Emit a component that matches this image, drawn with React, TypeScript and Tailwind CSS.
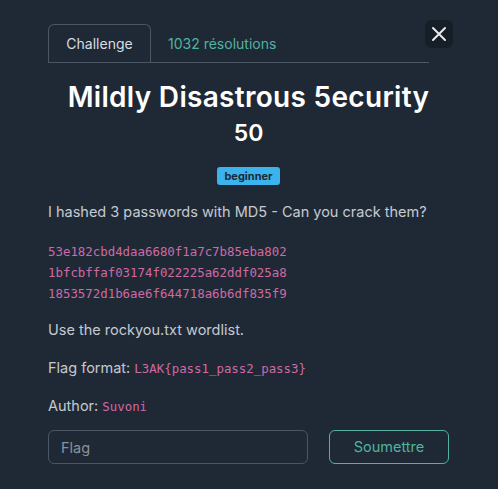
import React from 'react';

const hashes = [
  '53e182cbd4daa6680f1a7c7b85eba802',
  '1bfcbffaf03174f022225a62ddf025a8',
  '1853572d1b6ae6f644718a6b6df835f9',
];

export default function App() {
  return (
    <div
      className="relative w-[498px] h-[489px] bg-[#1f2936] text-[#c5cad1] overflow-hidden"
      style={{ fontFamily: 'Inter, "Noto Sans", sans-serif' }}
    >
      {/* close button */}
      <button className="absolute left-[425px] top-[20px] w-[28px] h-[28px] rounded-md bg-[#161e28] flex items-center justify-center">
        <svg width="18" height="18" viewBox="0 0 18 18" fill="none" stroke="#e8eaed" strokeWidth="2" strokeLinecap="round">
          <path d="M3 3 L15 15 M15 3 L3 15" />
        </svg>
      </button>

      <div className="pl-[48px] pr-[49px] pt-[24px]">
        {/* tabs */}
        <div className="flex items-end w-[381px] border-b border-[#4b5563]">
          <div className="w-[103px] h-[38px] border border-b-0 border-[#4b5563] rounded-t-md flex items-center justify-center text-[14px] text-[#d8dce1]">
            Challenge
          </div>
          <div className="h-[38px] flex items-center pl-[17px] text-[14px] text-[#4fb3a0]">
            1032 résolutions
          </div>
        </div>

        {/* title */}
        <h1 className="mt-[15px] text-center text-[28px] font-semibold text-white leading-[38px] tracking-[0.3px]">
          Mildly Disastrous 5ecurity
        </h1>
        <div className="text-center text-[23px] font-semibold text-white leading-[30px] mt-[2px]">50</div>

        <div className="flex justify-center mt-[19px]">
          <span className="h-[18px] px-[7px] rounded-[3px] bg-[#3bb4ee] text-[#1f2936] text-[11px] font-bold leading-[18px]">
            beginner
          </span>
        </div>

        {/* description */}
        <p className="mt-[17px] text-[14.5px] leading-[20px]">
          I hashed 3 passwords with MD5 - Can you crack them?
        </p>

        <div
          className="mt-[19px] text-[12.4px] leading-[21px] text-[#d06aa3]"
          style={{ fontFamily: '"DejaVu Sans Mono", monospace' }}
        >
          {hashes.map((h) => (
            <div key={h}>{h}</div>
          ))}
        </div>

        <p className="mt-[16px] text-[14.5px] leading-[20px]">Use the rockyou.txt wordlist.</p>

        <p className="mt-[18px] text-[14.5px] leading-[20px]">
          Flag format:{' '}
          <span className="text-[12.4px] text-[#d06aa3]" style={{ fontFamily: '"DejaVu Sans Mono", monospace' }}>
            L3AK{'{'}pass1_pass2_pass3{'}'}
          </span>
        </p>

        <p className="mt-[17px] text-[14.5px] leading-[20px]">
          Author:{' '}
          <span className="text-[12.4px] text-[#d06aa3]" style={{ fontFamily: '"DejaVu Sans Mono", monospace' }}>
            Suvoni
          </span>
        </p>

        {/* flag form */}
        <div className="flex gap-[21px] mt-[13px]">
          <input
            placeholder="Flag"
            className="w-[260px] h-[34px] rounded-md border border-[#4b5563] bg-transparent px-[12px] text-[14.5px] text-white placeholder:text-[#8b929b] outline-none"
          />
          <button className="w-[120px] h-[34px] rounded-md border border-[#4fb3a0] text-[#4fb3a0] text-[14.5px]">
            Soumettre
          </button>
        </div>
      </div>
    </div>
  );
}
